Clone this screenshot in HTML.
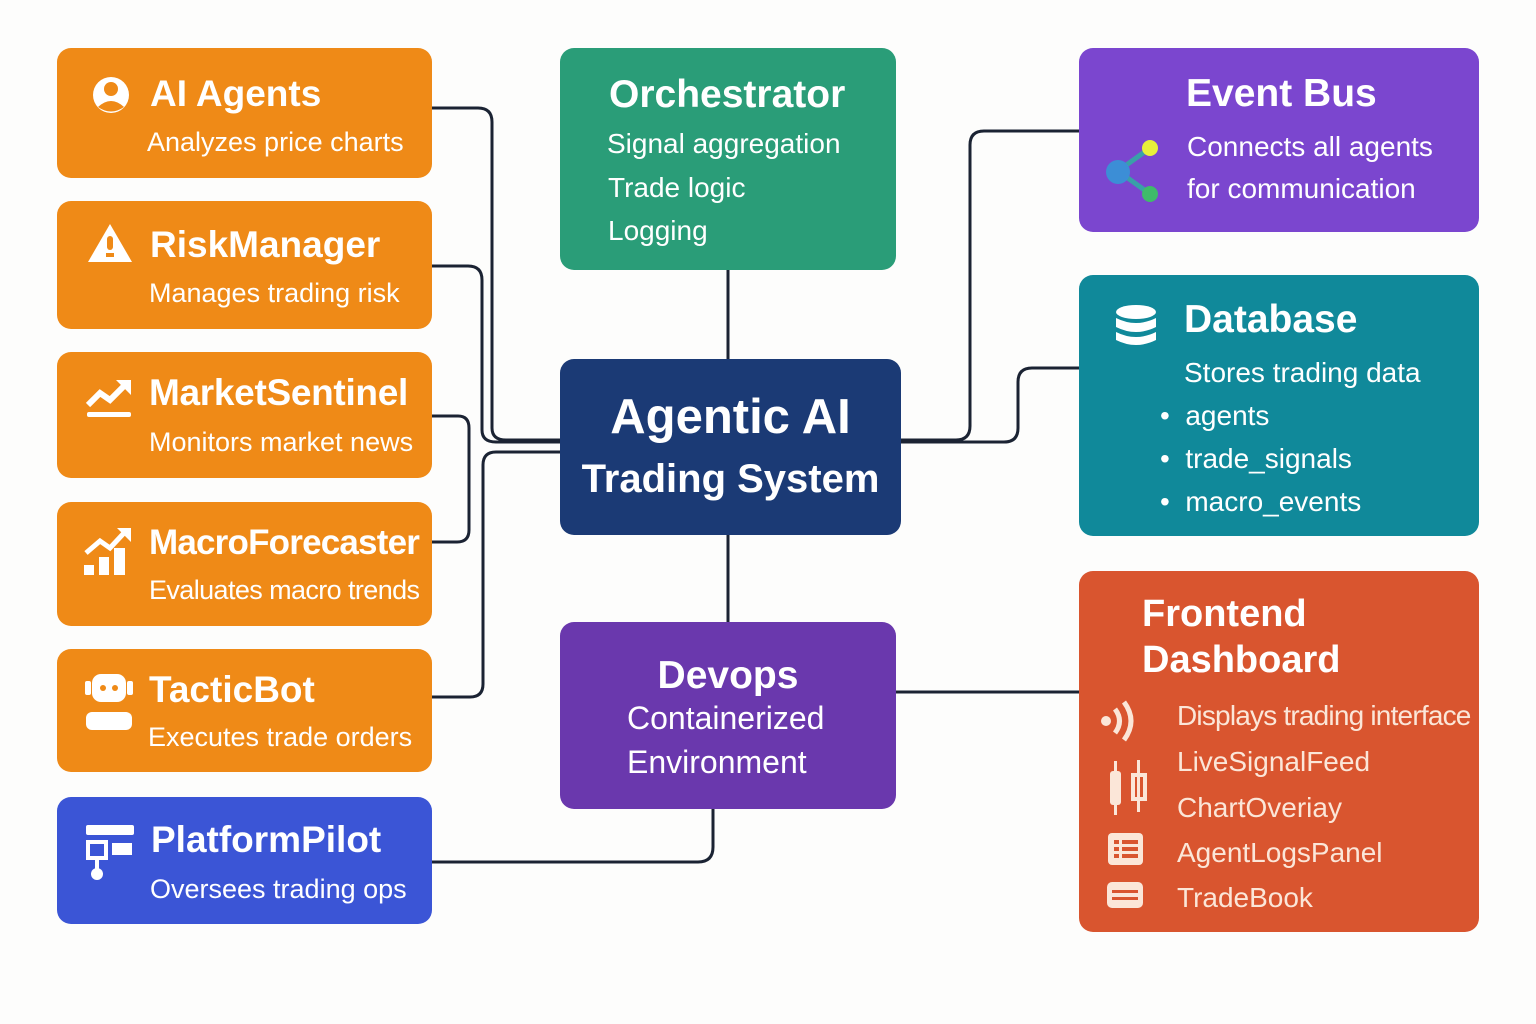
<!DOCTYPE html>
<html><head><meta charset="utf-8"><style>
body{margin:0;width:1536px;height:1024px;background:#fdfdfc;position:relative;overflow:hidden;font-family:"Liberation Sans","DejaVu Sans",sans-serif;color:#fff}
.b{position:absolute;border-radius:14px}
.o{background:#ef8a17}
.t{position:absolute;font-weight:bold;white-space:nowrap}
.s{position:absolute;white-space:nowrap}
svg{position:absolute;left:0;top:0}
</style></head><body>
<svg width="1536" height="1024" fill="none" stroke="#1b2333" stroke-width="3">
<path d="M432 108 H478 Q492 108 492 122 V428 Q492 440 506 440 H560"/>
<path d="M432 266 H468 Q482 266 482 280 V430 Q482 442 496 442 H560"/>
<path d="M432 416 H458 Q469 416 469 428 V530 Q469 542 457 542 H432"/>
<path d="M432 697 H470 Q483 697 483 684 V465 Q483 452 496 452 H560"/>
<path d="M432 862 H698 Q713 862 713 847 V809"/>
<path d="M728 270 V359"/><path d="M728 535 V622"/>
<path d="M896 692 H1079"/>
<path d="M901 440 H956 Q970 440 970 426 V145 Q970 131 984 131 H1079"/>
<path d="M901 442 H1004 Q1018 442 1018 428 V382 Q1018 368 1032 368 H1079"/>
</svg>

<div class="b o" style="left:57px;top:48px;width:375px;height:130px"></div>
<div class="b o" style="left:57px;top:201px;width:375px;height:128px"></div>
<div class="b o" style="left:57px;top:352px;width:375px;height:126px"></div>
<div class="b o" style="left:57px;top:502px;width:375px;height:124px"></div>
<div class="b o" style="left:57px;top:649px;width:375px;height:123px"></div>
<div class="b" style="left:57px;top:797px;width:375px;height:127px;background:#3b55d6"></div>
<div class="b" style="left:560px;top:48px;width:336px;height:222px;background:#2a9d78"></div>
<div class="b" style="left:560px;top:359px;width:341px;height:176px;background:#1b3a75"></div>
<div class="b" style="left:560px;top:622px;width:336px;height:187px;background:#6a38ad"></div>
<div class="b" style="left:1079px;top:48px;width:400px;height:184px;background:#7b46cf"></div>
<div class="b" style="left:1079px;top:275px;width:400px;height:261px;background:#10899a"></div>
<div class="b" style="left:1079px;top:571px;width:400px;height:361px;background:#d9552f"></div>

<svg width="1536" height="1024" fill="#fff">
<circle cx="111" cy="95" r="18"/><circle cx="111" cy="89" r="7" fill="#ef8a17"/><path d="M98 107 Q111 95 124 107 Q111 116 98 107Z" fill="#ef8a17"/>
<path d="M110 224 L132 262 H88Z"/><rect x="107" y="236" width="6" height="14" rx="3" fill="#ef8a17"/><rect x="106" y="253" width="8" height="4" fill="#ef8a17"/>
<path d="M88 405 L100 393 L110 400 L126 384" stroke="#fff" stroke-width="6" fill="none"/><path d="M116 380 H131 V395Z"/><rect x="87" y="412" width="44" height="5" rx="2"/>
<rect x="84" y="565" width="10" height="10"/><rect x="99" y="557" width="10" height="18"/><rect x="114" y="548" width="11" height="27"/><path d="M86 553 L100 541 L110 548 L124 533" stroke="#fff" stroke-width="5" fill="none"/><path d="M117 528 H131 V542Z"/>
<rect x="92" y="674" width="34" height="28" rx="9"/><circle cx="103" cy="688" r="3" fill="#ef8a17"/><circle cx="115" cy="688" r="3" fill="#ef8a17"/><rect x="85" y="681" width="6" height="14" rx="2"/><rect x="127" y="681" width="6" height="14" rx="2"/><rect x="86" y="712" width="46" height="18" rx="6"/>
<rect x="86" y="825" width="48" height="10" rx="2"/><rect x="88" y="842" width="18" height="16" fill="none" stroke="#fff" stroke-width="4"/><rect x="112" y="843" width="20" height="12"/><path d="M97 858 V870" stroke="#fff" stroke-width="4"/><circle cx="97" cy="874" r="6"/>
<path d="M1118 171 L1150 148 M1118 171 L1150 194" stroke="#39a0a8" stroke-width="5"/><circle cx="1118" cy="172" r="12" fill="#3c8ed6"/><circle cx="1150" cy="148" r="8" fill="#e8ef3a"/><circle cx="1150" cy="194" r="8" fill="#3fbb6a"/>
<ellipse cx="1136" cy="312" rx="20" ry="7"/><path d="M1116 318 Q1136 328 1156 318 V327 Q1136 337 1116 327Z"/><path d="M1116 332 Q1136 342 1156 332 V340 Q1136 350 1116 340Z"/>
<circle cx="1106" cy="721" r="5" fill="#fbe6d8"/><path d="M1115 709 Q1124 721 1115 733 M1124 702 Q1138 721 1124 740" stroke="#fbe6d8" stroke-width="5" fill="none"/>
<g fill="#fbe6d8"><rect x="1110" y="771" width="11" height="34" rx="3"/><rect x="1114" y="761" width="3" height="54"/><rect x="1133" y="775" width="12" height="24" fill="none" stroke="#fbe6d8" stroke-width="4"/><rect x="1137" y="760" width="3" height="52"/>
<rect x="1108" y="833" width="35" height="32" rx="4"/><rect x="1107" y="882" width="36" height="26" rx="5"/></g>
<g fill="#d9552f"><rect x="1114" y="840" width="5" height="4"/><rect x="1122" y="840" width="16" height="4"/><rect x="1114" y="847" width="5" height="4"/><rect x="1122" y="847" width="16" height="4"/><rect x="1114" y="854" width="5" height="4"/><rect x="1122" y="854" width="16" height="4"/><rect x="1112" y="890" width="26" height="3"/><rect x="1112" y="897" width="26" height="3"/></g>
</svg>

<div class="t" style="left:150px;top:73px;font-size:37px">AI Agents</div>
<div class="s" style="left:147px;top:127px;font-size:27px">Analyzes price charts</div>
<div class="t" style="left:150px;top:224px;font-size:37px">RiskManager</div>
<div class="s" style="left:149px;top:278px;font-size:27px">Manages trading risk</div>
<div class="t" style="left:149px;top:372px;font-size:37px;letter-spacing:-0.3px">MarketSentinel</div>
<div class="s" style="left:149px;top:427px;font-size:27px">Monitors market news</div>
<div class="t" style="left:149px;top:523px;font-size:35px;letter-spacing:-0.8px">MacroForecaster</div>
<div class="s" style="left:149px;top:575px;font-size:27px;letter-spacing:-0.6px">Evaluates macro trends</div>
<div class="t" style="left:149px;top:669px;font-size:37px">TacticBot</div>
<div class="s" style="left:148px;top:722px;font-size:27px">Executes trade orders</div>
<div class="t" style="left:151px;top:819px;font-size:37px">PlatformPilot</div>
<div class="s" style="left:150px;top:874px;font-size:27px">Oversees trading ops</div>

<div class="t" style="left:609px;top:73px;font-size:39px">Orchestrator</div>
<div class="s" style="left:607px;top:128px;font-size:28px">Signal aggregation</div>
<div class="s" style="left:608px;top:172px;font-size:28px">Trade logic</div>
<div class="s" style="left:608px;top:215px;font-size:28px">Logging</div>

<div class="t" style="left:560px;width:341px;text-align:center;top:389px;font-size:49px">Agentic AI</div>
<div class="t" style="left:560px;width:341px;text-align:center;top:457px;font-size:40px">Trading System</div>

<div class="t" style="left:560px;width:336px;text-align:center;top:654px;font-size:39px">Devops</div>
<div class="s" style="left:627px;top:700px;font-size:32px">Containerized</div>
<div class="s" style="left:627px;top:744px;font-size:32px">Environment</div>

<div class="t" style="left:1186px;top:72px;font-size:39px">Event Bus</div>
<div class="s" style="left:1187px;top:131px;font-size:28px">Connects all agents</div>
<div class="s" style="left:1187px;top:173px;font-size:28px">for communication</div>

<div class="t" style="left:1184px;top:298px;font-size:39px">Database</div>
<div class="s" style="left:1184px;top:357px;font-size:28px">Stores trading data</div>
<div class="s" style="left:1160px;top:400px;font-size:28px">• &nbsp;agents</div>
<div class="s" style="left:1160px;top:443px;font-size:28px">• &nbsp;trade_signals</div>
<div class="s" style="left:1160px;top:486px;font-size:28px">• &nbsp;macro_events</div>

<div class="t" style="left:1142px;top:593px;font-size:38px">Frontend</div>
<div class="t" style="left:1142px;top:639px;font-size:38px">Dashboard</div>
<div class="s" style="left:1177px;top:700px;font-size:28px;color:#fbe6d8;letter-spacing:-0.8px">Displays trading interface</div>
<div class="s" style="left:1177px;top:746px;font-size:28px;color:#fbe6d8">LiveSignalFeed</div>
<div class="s" style="left:1177px;top:792px;font-size:28px;color:#fbe6d8">ChartOveriay</div>
<div class="s" style="left:1177px;top:837px;font-size:28px;color:#fbe6d8">AgentLogsPanel</div>
<div class="s" style="left:1177px;top:882px;font-size:28px;color:#fbe6d8">TradeBook</div>
</body></html>
